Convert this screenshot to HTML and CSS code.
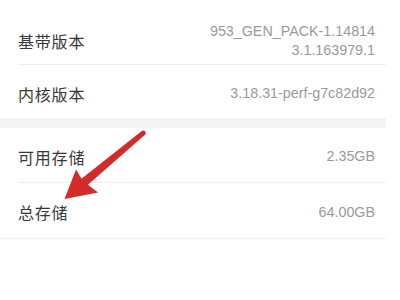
FILE: index.html
```html
<!DOCTYPE html>
<html lang="zh-CN">
<head>
<meta charset="utf-8">
<link rel="stylesheet" href="styles.css">
</head>
<body>
<div class="page">
  <div class="group">
    <div class="row row-first">
      <span class="label">基带版本</span>
      <span class="value">953_GEN_PACK-1.14814<br>3.1.163979.1</span>
    </div>
    <div class="row row-second">
      <span class="label">内核版本</span>
      <span class="value">3.18.31-perf-g7c82d92</span>
    </div>
  </div>
  <div class="band"></div>
  <div class="group group-lined">
    <div class="row">
      <span class="label">可用存储</span>
      <span class="value">2.35GB</span>
    </div>
    <div class="row">
      <span class="label">总存储</span>
      <span class="value">64.00GB</span>
    </div>
  </div>
  <svg class="arrow" width="400" height="300" viewBox="0 0 400 300">
    <path d="M141.5 131.2 L145 134.8 L86.5 186 L80.5 179.5 Z" fill="#d42a2a"/>
    <circle cx="143.2" cy="133" r="2.5" fill="#d42a2a"/>
    <path d="M64.5 199 L76 169.5 L83 181 L98 192.5 Z" fill="#d42a2a"/>
  </svg>
</div>
</body>
</html>
```

FILE: styles.css
```css
html, body {
  margin: 0;
  padding: 0;
  background: #ffffff;
}

.page {
  position: relative;
  width: 400px;
  height: 300px;
  overflow: hidden;
}

.group {
  width: 386px;
  background: #ffffff;
}

.group-lined {
  border-bottom: 1px solid #ededed;
}

.row {
  box-sizing: border-box;
  margin-left: 18px;
  padding-right: 11px;
  padding-top: 3px;
  height: 55px;
  display: flex;
  justify-content: space-between;
  align-items: center;
  border-bottom: 1px solid #ededed;
}

.row:last-child {
  border-bottom: none;
}

.row-first {
  height: 65px;
  padding-top: 18px;
}

.row-second {
  height: 53px;
  padding-top: 4px;
}

.label {
  font-family: "Noto Sans CJK SC", "Noto Sans", sans-serif;
  font-size: 16px;
  letter-spacing: 0.8px;
  color: #383838;
}

.value {
  font-family: "Liberation Sans", Arial, sans-serif;
  font-size: 14.3px;
  line-height: 19px;
  color: #9a9a9a;
  text-align: right;
}

.band {
  width: 386px;
  height: 10px;
  background: #f4f4f4;
}

.arrow {
  position: absolute;
  left: 0;
  top: 0;
}
```
